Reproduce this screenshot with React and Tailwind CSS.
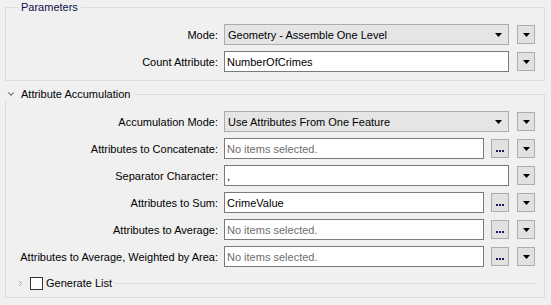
import { ChevronDown, ChevronRight } from 'lucide-react';

function Arrow() {
    return (
        <svg width="7" height="4" viewBox="0 0 7 4" className="block">
            <path d="M0 0h7L3.5 4z" fill="#000" />
        </svg>
    );
}

function DropButton() {
    return (
        <div className="ml-[8px] flex h-[19px] w-[18px] shrink-0 items-center justify-center border border-[#adadad] bg-[#e1e1e1]">
            <Arrow />
        </div>
    );
}

function MoreButton() {
    return (
        <div className="flex h-[19px] w-[18px] shrink-0 items-end justify-center gap-[1px] border border-[#adadad] bg-[#e1e1e1] pb-[5px]">
            <span className="h-[2px] w-[2px] bg-[#1c1c5c]" />
            <span className="h-[2px] w-[2px] bg-[#1c1c5c]" />
            <span className="h-[2px] w-[2px] bg-[#1c1c5c]" />
        </div>
    );
}

function Combo({ value }) {
    return (
        <div className="flex h-[21px] flex-1 items-center justify-between border border-[#acacac] bg-[#e5e5e5] pl-[3px] pr-[6px]">
            <span>{value}</span>
            <Arrow />
        </div>
    );
}

function Field({ value, placeholder }) {
    return (
        <div className="flex h-[21px] min-w-0 flex-1 items-center border border-[#7a7a7a] bg-white px-[2px]">
            {value ? (
                <span>{value}</span>
            ) : (
                <span className="text-[#6d6d6d]">{placeholder}</span>
            )}
        </div>
    );
}

function Row({ label, children }) {
    return (
        <div className="flex h-[21px] items-center">
            <div className="w-[204px] shrink-0 whitespace-nowrap text-right">{label}</div>
            <div className="ml-[6px] flex flex-1 items-center gap-[7px]">{children}</div>
            <DropButton />
        </div>
    );
}

export default function App() {
    return (
        <main className="h-[305px] w-[551px] overflow-hidden bg-[#f0f0f0] font-['Liberation_Sans',Arial,sans-serif] text-[11px] leading-[14px] text-black">
            <fieldset className="ml-[5px] w-[540px] border border-[#dcdcdc] pb-[8px] pl-[8px] pr-[9px] pt-[10px]">
                <legend className="ml-[4px] px-[3px] leading-[14px] text-[#10104a]">Parameters</legend>
                <div className="flex flex-col gap-[6px]">
                    <Row label="Mode:">
                        <Combo value="Geometry - Assemble One Level" />
                    </Row>
                    <Row label="Count Attribute:">
                        <Field value="NumberOfCrimes" />
                    </Row>
                </div>
            </fieldset>

            <section className="mt-[6px] ml-[5px] w-[540px]">
                <div className="flex h-[14px] items-center">
                    <ChevronDown className="ml-[1px] h-[10px] w-[10px] text-[#555]" strokeWidth={2.5} />
                    <span className="ml-[5px] whitespace-nowrap">Attribute Accumulation</span>
                    <div className="ml-[4px] h-[7px] flex-1 self-end border-r border-t border-[#dcdcdc]" />
                </div>
                <div className="border-b border-l border-r border-[#dcdcdc] pb-[7px] pl-[8px] pr-[9px] pt-[10px]">
                    <div className="flex flex-col gap-[6px]">
                        <Row label="Accumulation Mode:">
                            <Combo value="Use Attributes From One Feature" />
                        </Row>
                        <Row label="Attributes to Concatenate:">
                            <Field placeholder="No items selected." />
                            <MoreButton />
                        </Row>
                        <Row label="Separator Character:">
                            <Field value="," />
                        </Row>
                        <Row label="Attributes to Sum:">
                            <Field value="CrimeValue" />
                            <MoreButton />
                        </Row>
                        <Row label="Attributes to Average:">
                            <Field placeholder="No items selected." />
                            <MoreButton />
                        </Row>
                        <Row label="Attributes to Average, Weighted by Area:">
                            <Field placeholder="No items selected." />
                            <MoreButton />
                        </Row>
                    </div>
                    <div className="mt-[9px] flex h-[14px] items-center pl-[2px]">
                        <ChevronRight className="h-[9px] w-[9px] text-[#a0a0a0]" strokeWidth={2.5} />
                        <div className="ml-[5px] h-[13px] w-[13px] border border-[#333] bg-white" />
                        <span className="ml-[3px] whitespace-nowrap">Generate List</span>
                        <div className="ml-[3px] h-px flex-1 bg-[#dcdcdc]" />
                    </div>
                </div>
            </section>
        </main>
    );
}
